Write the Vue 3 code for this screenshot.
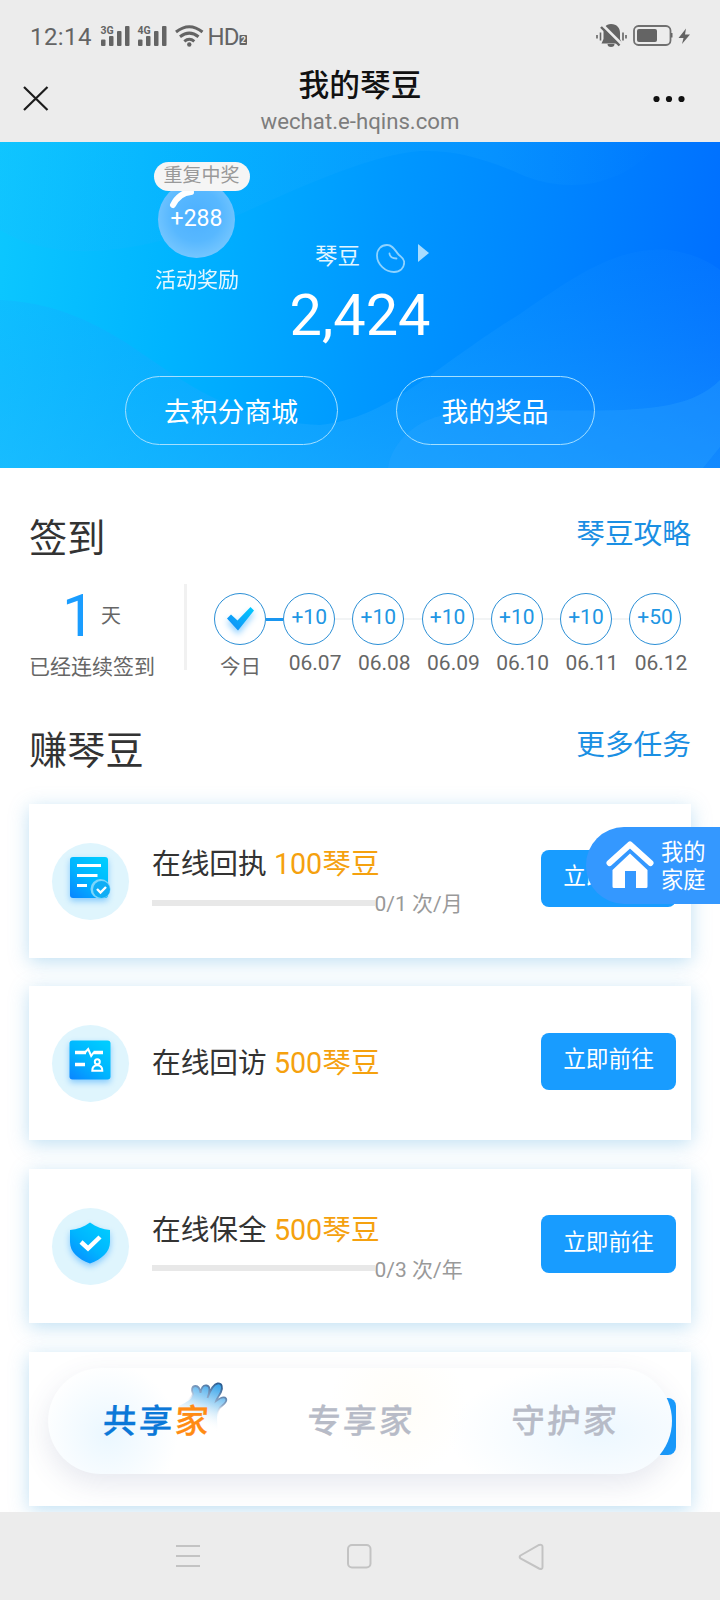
<script setup>
const steps = [
  { reward: '', date: '今日', done: true },
  { reward: '+10', date: '06.07' },
  { reward: '+10', date: '06.08' },
  { reward: '+10', date: '06.09' },
  { reward: '+10', date: '06.10' },
  { reward: '+10', date: '06.11' },
  { reward: '+50', date: '06.12' },
]
const tasks = [
  { icon: 'receipt', name: '在线回执', bonus: '100琴豆', progress: '0/1 次/月' },
  { icon: 'visit', name: '在线回访', bonus: '500琴豆', progress: '' },
  { icon: 'shield', name: '在线保全', bonus: '500琴豆', progress: '0/3 次/年' },
  { icon: '', name: '', bonus: '', progress: '' },
]
</script>

<template>
  <div class="page">
    <header class="top">
      <div class="status">
        <span class="clock">12:14</span>
        <svg class="signals" width="150" height="30" viewBox="98 20 150 30">
          <g fill="#646464">
            <rect x="101" y="39.500" width="4.500" height="6.500" rx="1" />
            <rect x="109" y="36" width="4.500" height="10" rx="1" />
            <rect x="117" y="31" width="4.500" height="15" rx="1" />
            <rect x="125" y="26" width="4.500" height="20" rx="1" />
            <rect x="138" y="39.500" width="4.500" height="6.500" rx="1" />
            <rect x="146" y="36" width="4.500" height="10" rx="1" />
            <rect x="154" y="31" width="4.500" height="15" rx="1" />
            <rect x="162" y="26" width="4.500" height="20" rx="1" />
          </g>
          <text class="gen" x="100.500" y="34.300">3G</text>
          <text class="gen" x="137.500" y="34.300">4G</text>
          <g fill="none" stroke="#646464" stroke-width="3">
            <path d="M176 32Q189.300 21.500 202.500 32" />
            <path d="M180 36.800Q189.300 29.500 198.500 36.800" />
            <path d="M184.300 41.300Q189.300 37.300 194.300 41.300" />
          </g>
          <circle cx="189.300" cy="44.500" r="2.200" fill="#646464" />
          <text class="hd" x="207.500" y="45">HD</text>
          <rect x="239.500" y="35" width="7.500" height="10" rx="1" fill="#646464" />
          <text class="two" x="240.700" y="43.400">2</text>
        </svg>
        <svg class="power" width="104" height="30" viewBox="592 20 104 30">
          <path d="M611 24c6 0 9 4 9 9v6l2 4.500H601.500l2-4.500v-6c0-5 2-9 7.500-9z" fill="#646464" />
          <path d="M607.500 44h7a3.500 3 0 0 1-7 0z" fill="#646464" />
          <path d="M602.500 25l20 20" stroke="#ececec" stroke-width="3" />
          <path d="M601 27l18.500 18.500" stroke="#646464" stroke-width="2.400" />
          <path d="M597 35v3.500M600.500 32.500v8M623 32.500v8M626 35v3.500" stroke="#646464" stroke-width="1.600" />
          <rect x="634" y="26" width="36.500" height="19" rx="4.500" fill="none" stroke="#707070" stroke-width="1.800" />
          <rect x="637" y="29" width="20" height="13" rx="2" fill="#646464" />
          <path d="M671 33h1.500v4.500H671z" fill="#646464" />
          <path d="M686 28.500l-7.500 9.500h5l-1.500 6 8-9.500h-5z" fill="#646464" />
        </svg>
      </div>
      <div class="titlebar">
        <svg class="close" width="26" height="26" viewBox="0 0 26 26">
          <path d="M1 1l23.500 23M24.500 1l-23.500 23" stroke="#1c1c1c" stroke-width="2.200" />
        </svg>
        <div class="titles">
          <div class="title">我的琴豆</div>
          <div class="host">wechat.e-hqins.com</div>
        </div>
        <svg class="more" width="32" height="8" viewBox="0 0 32 8">
          <circle cx="3.500" cy="4" r="3.100" /><circle cx="16" cy="4" r="3.100" /><circle cx="28.500" cy="4" r="3.100" />
        </svg>
      </div>
    </header>

    <main class="content">
      <section class="hero">
        <svg class="waves" width="720" height="326" viewBox="0 0 720 326">
          <defs>
            <linearGradient id="crest" x1="0" y1="0" x2="1" y2="0"><stop offset="0" stop-color="#2bb0ff" stop-opacity=".12" /><stop offset=".75" stop-color="#2bb0ff" stop-opacity=".14" /><stop offset="1" stop-color="#2bb0ff" stop-opacity="0" /></linearGradient>
            <linearGradient id="swell" x1="0" y1="0" x2="0" y2="1"><stop offset="0" stop-color="#1c94ff" stop-opacity=".1" /><stop offset="1" stop-color="#2cb2ff" stop-opacity=".42" /></linearGradient>
          </defs>
          <path d="M0 0H660C620 50 560 50 520 32C480 14 450 8 420 9C370 13 300 45 245 70C150 110 60 125 0 88Z" fill="url(#crest)" />
          <path d="M0 158C50 160 90 178 125 200C175 233 230 280 320 283C390 276 440 220 520 172C580 130 620 104 670 108C695 112 710 120 720 128V326H0Z" fill="url(#swell)" />
          <path d="M388 326C392 300 415 280 440 274C470 266 500 268 540 268C640 270 690 268 720 238V305L703 326Z" fill="#30a6ff" opacity=".3" />
        </svg>
        <div class="bubble">
          <span class="tag">重复中奖</span>
          <div class="ball">
            <svg class="shine" width="30" height="24" viewBox="0 0 30 24"><path d="M4 20Q10 8 22 7" fill="none" stroke="#fff" stroke-width="6" stroke-linecap="round" /></svg>
            <span>+288</span>
          </div>
          <span class="bubble-name">活动奖励</span>
        </div>
        <div class="balance-label">
          <span>琴豆</span>
          <svg class="bean" width="29" height="29" viewBox="0 0 29 29" fill="none" stroke="#8fd3ff">
            <path d="M11 1C5 1 1 5.500 1 11.500C1 20.500 9.500 28 18 28C24 28 28.200 24 28.200 18.500C28.200 14.500 25.500 13 23 11C19 7 17.500 1 11 1Z" stroke-width="1.800" />
            <path d="M13.500 9.500Q14 14.500 20.500 14.500" stroke-width="1.800" stroke-linecap="round" />
          </svg>
          <svg class="arrow" width="11" height="18" viewBox="0 0 11 18"><path d="M0 0L11 9L0 18z" fill="#a8dcff" /></svg>
        </div>
        <div class="balance">2,424</div>
        <div class="hero-actions">
          <button class="pill mall">去积分商城</button>
          <button class="pill prizes">我的奖品</button>
        </div>
      </section>

      <section class="signin">
        <div class="heading"><h2>签到</h2><a>琴豆攻略</a></div>
        <div class="signin-row">
          <div class="streak">
            <div class="days"><b>1</b><span>天</span></div>
            <div class="streak-note">已经连续签到</div>
          </div>
          <div class="steps">
            <div v-for="s in steps" :key="s.date" class="step" :class="{ done: s.done }">
              <div class="node">
                <div class="ring">
                  <svg v-if="s.done" class="tick" width="52" height="52" viewBox="0 0 52 52">
                    <defs><linearGradient id="tickFill" x1="0" y1="1" x2="1" y2="0"><stop offset="0" stop-color="#1488f5" /><stop offset="1" stop-color="#00ccff" /></linearGradient></defs>
                    <path d="M13 25.500l4-4 6.500 6L36.500 14l3.500 3.500L24 37.500z" fill="url(#tickFill)" />
                  </svg>
                  <template v-else>{{ s.reward }}</template>
                </div>
                <i class="link"></i>
              </div>
              <div class="date">{{ s.date }}</div>
            </div>
          </div>
        </div>
      </section>

      <section class="earn">
        <div class="heading"><h2>赚琴豆</h2><a>更多任务</a></div>
        <div class="cards">
          <article v-for="(t, i) in tasks" :key="i" class="card">
            <div class="icon" :class="{ blank: !t.icon }">
              <svg width="77" height="77" viewBox="0 0 77 77">
                <defs>
                  <linearGradient :id="'fill' + i" x1="0" y1="1" x2=".8" y2="0"><stop offset="0" stop-color="#0a84ff" /><stop offset=".5" stop-color="#00b4ff" /><stop offset="1" stop-color="#00ccff" /></linearGradient>
                </defs>
                <g v-if="t.icon === 'receipt'">
                  <rect class="glow" x="18" y="14" width="38" height="41" rx="3" :fill="'url(#fill' + i + ')'" />
                  <path d="M25 22.500h24M25 32.500h20.500M25 42.500h10" stroke="#fff" stroke-width="3.200" />
                  <circle cx="48.500" cy="46" r="10" fill="#7dd6fb" />
                  <circle cx="49.500" cy="46.500" r="8.500" fill="#10adf5" />
                  <path d="M45 46l3.500 3.500 5.500-5.500" fill="none" stroke="#fff" stroke-width="2.400" />
                </g>
                <g v-else-if="t.icon === 'visit'">
                  <rect class="glow" x="17.500" y="15.500" width="41" height="39" rx="3" :fill="'url(#fill' + i + ')'" />
                  <path d="M23 27.500h11M41.500 27.500h9.500M23 39.500h10" fill="none" stroke="#fff" stroke-width="3.600" />
                  <path d="M33 27.500l3.200-3.500 3 7 2.800-4" fill="none" stroke="#fff" stroke-width="2" />
                  <circle cx="45.300" cy="36.700" r="2.500" fill="none" stroke="#fff" stroke-width="2" />
                  <path d="M40.300 45.800c0-4 2.500-5.500 5-5.500s5 1.500 5 5.500z" fill="none" stroke="#fff" stroke-width="2" />
                </g>
                <g v-else-if="t.icon === 'shield'">
                  <path class="glow" d="M38 14.500C44 19 51 21.500 58 22V34C58 44 50 51 38 55.500C26 51 18 44 18 34V22C25 21.500 32 19 38 14.500Z" :fill="'url(#fill' + i + ')'" />
                  <path d="M29 34l7 6.500L48 29" fill="none" stroke="#fff" stroke-width="4.500" />
                </g>
              </svg>
            </div>
            <div class="info">
              <div class="name">{{ t.name }} <em>{{ t.bonus }}</em></div>
              <div v-if="t.progress" class="progress"><i class="track"></i><span>{{ t.progress }}</span></div>
            </div>
            <button class="go">立即前往</button>
          </article>
        </div>
      </section>
    </main>

    <aside class="family">
      <svg width="48" height="49" viewBox="0 0 48 49">
        <path d="M3.500 23L24 4.500L44.500 23" fill="none" stroke="#fff" stroke-width="6" stroke-linecap="round" stroke-linejoin="round" />
        <path d="M6.500 30L24 13.500L41.500 30V46.500Q41.500 48 40 48H30V31H19V48H8Q6.500 48 6.500 46.500Z" fill="#fff" />
      </svg>
      <span>我的<br />家庭</span>
    </aside>

    <nav class="tabs">
      <div class="tab active">
        <svg class="hand" width="54" height="56" viewBox="176 1378 54 56">
          <defs>
            <linearGradient id="handFill" x1=".7" y1="0" x2=".35" y2="1"><stop offset="0" stop-color="#3ba5ea" /><stop offset=".4" stop-color="#b4ddf7" /><stop offset=".85" stop-color="#fff" stop-opacity="0" /></linearGradient>
            <linearGradient id="handLine" x1=".8" y1="0" x2=".45" y2=".7"><stop offset="0" stop-color="#2e5f93" /><stop offset=".45" stop-color="#8fa9c8" /><stop offset=".8" stop-color="#fff" stop-opacity="0" /></linearGradient>
          </defs>
          <path d="M179 1405C187 1401 192 1398 193 1393C191 1389 192 1385 195.500 1385C199 1385 200 1388 200.500 1392C201 1387 203 1384 206.500 1384.500C210.500 1385 210 1390 207.500 1397C210 1390 213 1383 217.500 1382.500C222 1382 223 1386 221 1391C219 1395 217 1397 216 1400C220 1397 224 1395 226 1397.500C228 1401 223 1404 220 1406.500C216 1411 217 1421 218 1431L180 1431Z" fill="url(#handFill)" stroke="url(#handLine)" stroke-width="1.800" />
        </svg>
        <span class="tab-text">共享<b>家</b></span>
      </div>
      <div class="tab"><span class="tab-text">专享家</span></div>
      <div class="tab"><span class="tab-text">守护家</span></div>
    </nav>

    <footer class="sysnav">
      <svg width="24" height="26" viewBox="0 0 24 26"><path d="M0 3h24M0 13h24M0 23h24" stroke="#c3c3c3" stroke-width="2" /></svg>
      <svg width="26" height="26" viewBox="0 0 26 26"><rect x="2" y="2" width="22.500" height="22.500" rx="4" fill="none" stroke="#c3c3c3" stroke-width="2" /></svg>
      <svg width="26" height="28" viewBox="0 0 26 28"><path d="M2.500 12.500L21 2Q24.500 1 24.500 4V24Q24.500 27 21 25.500L2.500 15.500Q.8 14 2.500 12.500Z" fill="none" stroke="#c3c3c3" stroke-width="2" /></svg>
    </footer>
  </div>
</template>

<style>
body { margin: 0; background: #fff; }
</style>

<style scoped>
.page { position: relative; width: 720px; height: 1600px; display: flex; flex-direction: column; overflow: hidden; background: #fff; font-family: Roboto, "Noto Sans CJK SC", sans-serif; color: #333; }
.page svg { display: block; flex: none; }
button { font: inherit; border: 0; margin: 0; padding: 0; background: none; }
.top { flex: none; height: 142px; background: #ececec; }
.status { display: flex; height: 66px; padding: 20px 24px 0 30px; box-sizing: border-box; }
.clock { width: 68px; font-size: 24px; line-height: 34px; color: #646464; letter-spacing: .4px; }
.gen { font: 700 10.500px Roboto, sans-serif; fill: #646464; stroke: #ececec; stroke-width: 1.500px; paint-order: stroke; }
.hd { font: 24px Roboto, sans-serif; fill: #646464; letter-spacing: -.8px; }
.two { font: 700 9px Roboto, sans-serif; fill: #ececec; }
.power { margin-left: auto; }
.titlebar { display: flex; align-items: flex-start; padding: 0 35px 0 23px; }
.close { margin-top: 20px; }
.titles { flex: 1; text-align: center; padding-left: 18px; }
.title { margin-top: 1px; font-size: 30.700px; line-height: 38px; font-weight: 500; color: #111; }
.host { font-size: 22.200px; line-height: 32px; color: #7d7d7d; }
.more { margin-top: 29px; fill: #111; }
.content { flex: 1; min-height: 0; overflow: hidden; }
.hero { position: relative; height: 326px; box-sizing: border-box; padding-top: 98px; color: #fff; background: linear-gradient(97deg, #0cc8ff 0%, #00b4ff 25%, #0098ff 52%, #0084ff 75%, #006dff 100%); }
.waves { position: absolute; left: 0; top: 0; }
.bubble { position: absolute; left: 154px; top: 20px; width: 96px; display: flex; flex-direction: column; align-items: flex-start; }
.tag { position: relative; z-index: 1; width: 96px; height: 29px; border-radius: 15px; background: #f5f5f5; color: #999; font-size: 19px; line-height: 27px; text-align: center; text-indent: -1px; }
.ball { position: relative; width: 77px; height: 77px; margin: -10px 0 0 4px; border-radius: 50%; background: radial-gradient(circle at 50% 45%, #4cb0ff 0%, #58b8ff 45%, #8ed3ff 100%); font-size: 23px; line-height: 76px; text-align: center; }
.shine { position: absolute; left: 11px; top: 4px; }
.ball span { position: relative; }
.bubble-name { width: 86px; margin-top: 7px; font-size: 21px; line-height: 30px; text-align: center; opacity: .9; white-space: nowrap; }
.balance-label { position: relative; display: flex; align-items: flex-start; height: 32px; padding-left: 315px; font-size: 22.500px; line-height: 32px; color: #e3f6ff; }
.bean { margin: 4px 0 0 16px; }
.arrow { margin: 4px 0 0 13px; }
.balance { position: relative; margin-top: 13px; font-size: 57.700px; line-height: 61px; text-align: center; }
.hero-actions { position: relative; display: flex; gap: 58px; margin-top: 30px; padding-left: 125px; }
.pill { height: 69px; box-sizing: border-box; border: 1px solid #a5e0ff; border-radius: 35px; color: #fff; font-size: 26.800px; line-height: 69px; padding-top: 2px; }
.mall { width: 213px; padding-right: 1px; }
.prizes { width: 199px; padding-right: 1px; }
.signin { padding: 46px 29px 0; }
.heading { display: flex; justify-content: space-between; align-items: flex-start; }
h2 { margin: 0; font-size: 38.200px; line-height: 51px; font-weight: 400; color: #333; }
.heading a { font-size: 28.700px; line-height: 40px; color: #1a8fe3; }
.signin-row { display: flex; height: 98px; margin-top: 19px; }
.streak { flex: none; width: 155px; padding-top: 7px; background: linear-gradient(#f1f1f1, #f1f1f1) right top / 3px 86px no-repeat; margin-right: 27px; padding-right: 3px; }
.days { display: flex; align-items: center; height: 50px; padding-left: 33px; }
.days b { width: 39px; font-weight: 400; font-size: 59px; line-height: 50px; color: #1a9dff; }
.days span { margin-top: -3px; font-size: 20px; color: #666; }
.streak-note { margin-top: 12px; font-size: 21px; line-height: 28px; color: #666; white-space: nowrap; }
.steps { flex: none; display: flex; padding-top: 9px; }
.step { width: 69.200px; flex: none; }
.node { display: flex; align-items: center; }
.ring { width: 52px; height: 52px; box-sizing: border-box; border: 1px solid #2b8fd6; border-radius: 50%; font-size: 21px; line-height: 47px; text-align: center; color: #2196e3; }
.tick { margin: -1px; filter: drop-shadow(0 4px 3px #8ccfff); }
.link { flex: 1; height: 2px; background: #f2f4f5; }
.done .link { height: 3px; background: #1a96f0; }
.step:last-child .link { visibility: hidden; }
.date { margin-top: 4px; padding-left: 5.500px; font-size: 21px; line-height: 28px; color: #666; white-space: nowrap; }
.done .date { padding: 4px 0 0 6px; font-size: 20.500px; }
.earn { padding: 43.500px 29px 0; }
.earn .heading a { line-height: 38px; }
.cards { display: flex; flex-direction: column; gap: 28.600px; margin-top: 27.200px; }
.card { flex: none; display: flex; align-items: flex-start; height: 154.100px; box-sizing: border-box; padding: 0 15px 0 23px; background: #fff; box-shadow: 0 4px 18px rgba(70, 165, 220, .34); }
.icon { width: 77px; height: 77px; margin-top: 39px; border-radius: 50%; background: #dff5fd; }
.blank { visibility: hidden; }
.glow { filter: drop-shadow(0 3px 3px rgba(0, 140, 255, .4)); }
.info { flex: 1; height: 152.600px; display: flex; flex-direction: column; justify-content: center; padding-left: 23px; }
.name { font-size: 28.700px; line-height: 42px; color: #333; white-space: nowrap; }
.name em { font-style: normal; color: #f5a10e; }
.progress { display: flex; align-items: center; height: 24px; margin: 7px 0 0; font-size: 21px; color: #999; white-space: nowrap; }
.track { width: 222.500px; height: 6px; margin-top: -3px; background: #e8e8e8; }
.progress span { line-height: 24px; }
.go { width: 135px; height: 57.500px; margin-top: 46.200px; border-radius: 8px; background: #189cff; color: #fff; font-size: 22.700px; line-height: 53px; padding-bottom: 4px; }
.family { position: absolute; right: 0; top: 827px; width: 134px; height: 77px; box-sizing: border-box; display: flex; gap: 7px; padding: 13px 0 0 20px; border-radius: 38px 0 0 38px; background: #3498ff; color: #fff; font-size: 22.300px; line-height: 27.500px; }
.family span { margin-top: -1px; }
.tabs { position: absolute; left: 48px; top: 1368px; width: 624px; height: 106px; box-sizing: border-box; display: flex; padding: 0 4px 0 7px; border-radius: 53px; background: radial-gradient(circle at 60px 66px, rgba(232, 246, 255, .9), rgba(255, 255, 255, 0) 70px), radial-gradient(150px 70px at 550px 66px, rgba(236, 247, 255, .95), rgba(255, 255, 255, 0)), radial-gradient(circle at 350px 40px, #fffdf8, rgba(255, 255, 255, 0) 70px), #fff; box-shadow: 0 10px 28px rgba(60, 80, 130, .13); }
.tab { position: relative; width: 204px; flex: none; text-align: center; color: #b7bbc7; font-size: 33.500px; font-weight: 500; line-height: 108px; -webkit-text-stroke: .25px currentColor; }
.tab-text { position: relative; display: inline-block; letter-spacing: 2.500px; transform: skewX(-4deg); }
.active .tab-text { color: #0b78d8; }
.active b { font-weight: 500; color: #ff8b13; }
.hand { position: absolute; left: 121px; top: 11px; }
.sysnav { position: relative; flex: none; height: 88px; background: #ececec; display: flex; align-items: flex-start; justify-content: space-between; padding: 31px 176px 0 176px; box-sizing: border-box; }
</style>
